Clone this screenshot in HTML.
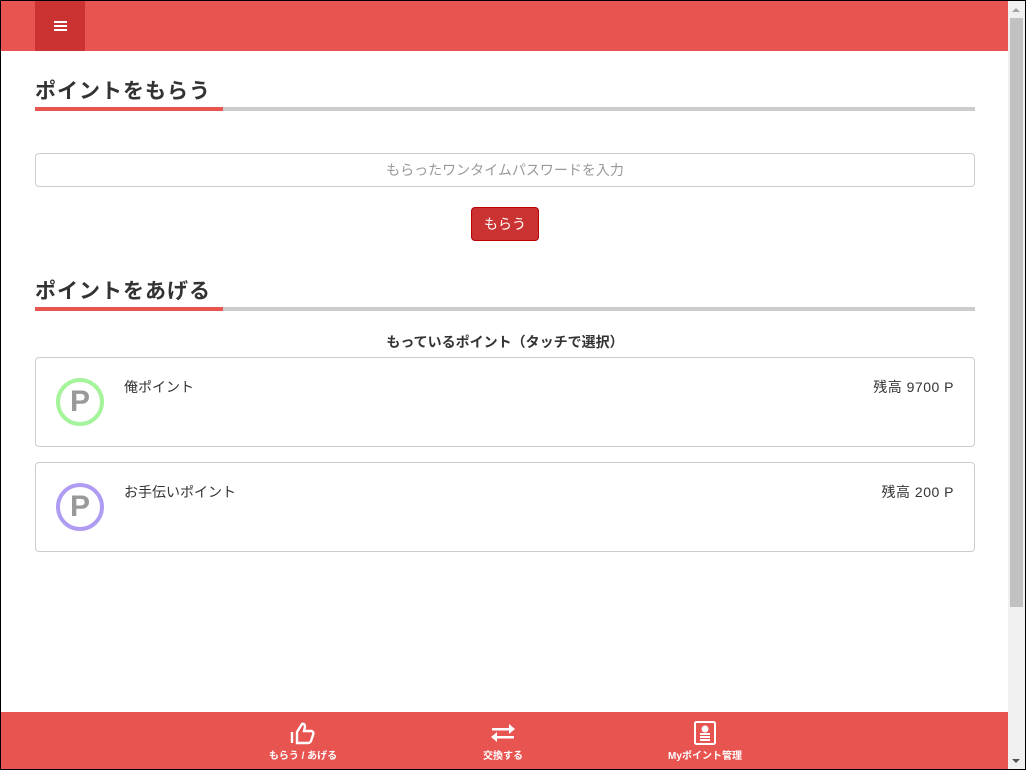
<!DOCTYPE html>
<html><head><meta charset="utf-8"><style>
*{box-sizing:border-box;margin:0;padding:0}
html,body{width:1026px;height:770px;overflow:hidden;background:#fff;font-family:"Liberation Sans","Noto Sans CJK JP",sans-serif;color:#333}
.frame{position:absolute;left:0;top:0;width:1026px;height:770px;border:1px solid #000;pointer-events:none;z-index:10}
.header{position:absolute;left:1px;top:1px;width:1007px;height:50px;background:#e85450}
.menu{position:absolute;left:34px;top:0;width:50px;height:50px;background:#cb3232}
.menu i{position:absolute;left:19px;width:13px;height:2px;background:#fff}
.sb{position:absolute;left:1008px;top:1px;width:17px;height:768px;background:#f0f0f0}
.thumb{position:absolute;left:2px;top:17px;width:13px;height:589px;background:#c1c1c1}
.up{position:absolute;left:4px;top:7px;border-left:4px solid transparent;border-right:4px solid transparent;border-bottom:4px solid #a3a3a3}
.dn{position:absolute;left:4px;top:758px;border-left:4px solid transparent;border-right:4px solid transparent;border-top:4px solid #505050}
h2{position:absolute;left:35px;font-size:21px;font-weight:bold;color:#333;letter-spacing:1px}
.line{position:absolute;left:35px;width:940px;height:4px;background:#ccc}
.line b{display:block;width:188px;height:4px;background:#e85450}
.input{position:absolute;left:35px;top:153px;width:940px;height:34px;border:1px solid #ccc;border-radius:4px;text-align:center;line-height:32px;font-size:14px;color:#999}
.btn{position:absolute;left:471px;top:207px;width:68px;height:34px;background:#cb3232;border:1px solid #b00;border-radius:4px;color:#fff;font-size:14px;text-align:center;line-height:32px}
.sub{position:absolute;left:35px;width:940px;top:332px;text-align:center;font-size:14px;font-weight:bold}
.card{position:absolute;left:35px;width:940px;height:90px;border:1px solid #ccc;border-radius:4px}
.ic{position:absolute;left:20px;top:20px;width:48px;height:48px;border-radius:50%;border:4px solid;text-align:center;font:bold 30px/40px "Liberation Sans Narrow","Liberation Sans",sans-serif;color:#999}
.nm{position:absolute;left:88px;top:19px;font-size:14px}
.bal{position:absolute;right:20px;top:19px;font-size:14px;letter-spacing:0.5px}
.footer{position:absolute;left:1px;top:712px;width:1007px;height:57px;background:#e85450;color:#fff}
.fi{position:absolute;top:0;width:140px;text-align:center;font-size:10px;font-weight:bold}
.fi svg{display:block;margin:9px auto 0}
.fi span{display:block;margin-top:2px}
</style></head><body>
<div class="header"><div class="menu"><i style="top:20px"></i><i style="top:24px"></i><i style="top:28px"></i></div></div>
<div class="sb"><div class="up"></div><div class="thumb"></div><div class="dn"></div></div>
<h2 style="top:75px">ポイントをもらう</h2>
<div class="line" style="top:107px"><b></b></div>
<div class="input">もらったワンタイムパスワードを入力</div>
<div class="btn">もらう</div>
<h2 style="top:275px">ポイントをあげる</h2>
<div class="line" style="top:307px"><b></b></div>
<div class="sub">もっているポイント（タッチで選択）</div>
<div class="card" style="top:357px"><div class="ic" style="border-color:#a5f39a">P</div><div class="nm">俺ポイント</div><div class="bal">残高 9700 P</div></div>
<div class="card" style="top:462px"><div class="ic" style="border-color:#b09cf3">P</div><div class="nm">お手伝いポイント</div><div class="bal">残高 200 P</div></div>
<div class="footer">
<div class="fi" style="left:232px"><svg width="26" height="24" viewBox="0 0 26 24" fill="none" stroke="#fff" stroke-width="2.4"><path d="M2 11v11"/><path d="M7 11l5-8c2-1 3 1 3 3l-1 4h7c2 0 3 2 2 4l-2 6c-1 2-2 2-3 2H7z"/></svg><span>もらう / あげる</span></div>
<div class="fi" style="left:432px"><svg width="26" height="24" viewBox="0 0 26 24" fill="#fff"><path d="M2 7h17V3l6 5-6 5V9.5H2z"/><path d="M24 15H7v-4l-6 5 6 5v-3.5h17z"/></svg><span>交換する</span></div>
<div class="fi" style="left:634px"><svg width="26" height="24" viewBox="0 0 26 24" fill="none" stroke="#fff" stroke-width="2"><rect x="3" y="1" width="20" height="22" rx="1.5"/><circle cx="13" cy="8" r="2.5" fill="#fff"/><path d="M8 13h10M8 16h10M8 19h10"/></svg><span>Myポイント管理</span></div>
</div>
<div class="frame"></div>
</body></html>
